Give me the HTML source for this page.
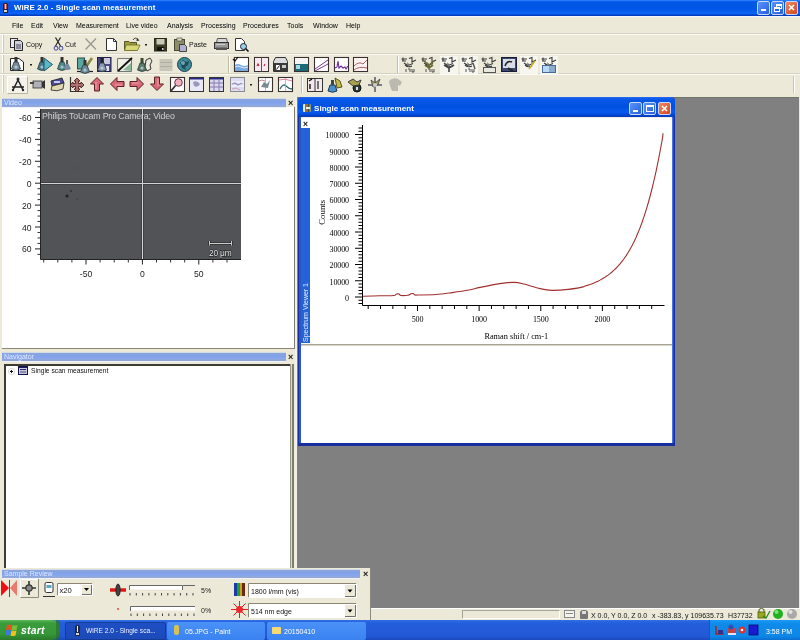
<!DOCTYPE html>
<html><head><meta charset="utf-8">
<style>
*{margin:0;padding:0;box-sizing:border-box}
html,body{width:800px;height:640px;overflow:hidden;background:#ECE9D8;font-family:"Liberation Sans",sans-serif;position:relative}
.t,svg,.xsm{will-change:transform}
.a{position:absolute}
.t{position:absolute;white-space:nowrap;line-height:1}
/* title bar */
#title{left:0;top:0;width:800px;height:16px;background:linear-gradient(#3a8cff 0px,#1468f0 1px,#0058e6 2px,#0055e5 9px,#0a64f5 13px,#0a60ee 14px,#003dbf 15px,#003dbf 16px)}
#title .txt{left:14px;top:3.5px;font-weight:bold;font-size:7.9px;color:#fff;letter-spacing:0.1px}
.tb{position:absolute;top:1px;width:13px;height:14px;border:1px solid #c8d8f8;border-radius:2px;background:linear-gradient(135deg,#5a94f8,#2a5ee0)}
.tbc{background:linear-gradient(135deg,#f08a60,#d4461c)}
/* menu */
#menu .t{top:22px;font-size:7px;color:#000}
.sep-h{position:absolute;height:1px;background:#d6d2c2}
.sep-hw{position:absolute;height:1px;background:#fbfaf5}
.dock-hdr{position:absolute;height:8px;background:linear-gradient(#8ca6d8,#80a2ea 40%,#86a6ee 60%,#96a8d0);box-shadow:0 -1px 0 #d4dcea,0 1px 0 #eef2fc}
.dock-hdr .t{left:2px;top:0px;font-size:7px;color:#dfe8ff}
.xsm{position:absolute;font-size:8px;font-weight:bold;color:#111;line-height:1}
</style></head><body>

<!-- title bar -->
<div id="title" class="a">
  <div class="a" style="left:3px;top:3px;width:5px;height:10px;background:#3a1a20;border-radius:2px 2px 1px 1px"></div><div class="a" style="left:4px;top:4px;width:3px;height:5px;background:#c84a3a"></div><div class="a" style="left:5px;top:4px;width:1px;height:5px;background:#f8e0d0"></div><div class="a" style="left:4px;top:10px;width:3px;height:2px;background:#e8d8c8"></div>
  <div class="t txt">WiRE 2.0 - Single scan measurement</div>
  <div class="tb" style="left:757px"><div class="a" style="left:3px;top:7px;width:5px;height:2px;background:#fff"></div></div>
  <div class="tb" style="left:771px"><div class="a" style="left:4px;top:2px;width:6px;height:5px;border:1px solid #fff;border-top-width:2px"></div><div class="a" style="left:2px;top:5px;width:6px;height:5px;border:1px solid #fff;border-top-width:2px;background:#2a62e6"></div></div>
  <div class="tb tbc" style="left:785px"><svg class="a" style="left:0;top:0" width="11" height="11"><path d="M3 3L8 8M8 3L3 8" stroke="#fff" stroke-width="1.6"/></svg></div>
</div>
<div class="a" style="left:0;top:16px;width:800px;height:1px;background:#f4f6fb"></div>

<!-- menu -->
<div id="menu">
  <div class="t" style="left:12px">File</div>
  <div class="t" style="left:31px">Edit</div>
  <div class="t" style="left:53px">View</div>
  <div class="t" style="left:76px">Measurement</div>
  <div class="t" style="left:126px">Live video</div>
  <div class="t" style="left:167px">Analysis</div>
  <div class="t" style="left:201px">Processing</div>
  <div class="t" style="left:243px">Procedures</div>
  <div class="t" style="left:287px">Tools</div>
  <div class="t" style="left:313px">Window</div>
  <div class="t" style="left:346px">Help</div>
</div>

<!-- toolbar band separators -->
<div class="sep-h" style="left:0;top:33px;width:800px"></div>
<div class="sep-hw" style="left:0;top:34px;width:800px"></div>
<div class="sep-h" style="left:0;top:53px;width:800px"></div>
<div class="sep-hw" style="left:0;top:54px;width:800px"></div>
<div class="sep-h" style="left:0;top:73px;width:800px"></div>
<div class="sep-hw" style="left:0;top:74px;width:800px"></div>

<!-- TOOLBARS -->
<div id="tools"><svg class="a" style="left:0;top:0" width="800" height="97" viewBox="0 0 800 97"><g transform="translate(10 37)"><rect x="0.5" y="1.5" width="7" height="9" fill="#e8e8f0" stroke="#333" /><path d="M4.5 3.5H10.5L12.5 5.5V13.5H4.5Z" fill="#d0d0dc" stroke="#222"/><rect x="6" y="7" width="5" height="5" fill="#8a8a9a"/></g><g transform="translate(54 37)"><path d="M1.5 0.5L6.5 9M6.5 0.5L1.5 9" stroke="#222" stroke-width="1.2" fill="none"/><circle cx="2" cy="11.3" r="1.9" fill="none" stroke="#5a5aa0" stroke-width="1.1"/><circle cx="7" cy="11.3" r="1.9" fill="none" stroke="#5a5aa0" stroke-width="1.1"/></g><g transform="translate(85 37)"><path d="M0.5 1.5L11 12.5M11 1.5L0.5 12.5" stroke="#9a9890" stroke-width="1.3" fill="none"/></g><g transform="translate(106 38)"><path d="M0.5 0.5H7.5L10.5 3.5V12.5H0.5Z" fill="#fff" stroke="#333"/><path d="M7.5 0.5V3.5H10.5" fill="none" stroke="#333"/></g><g transform="translate(124 37)"><path d="M0.5 4.5H5L6 5.5H12.5V13H0.5Z" fill="#9a9a40" stroke="#555520"/><path d="M2 8H16L13.5 13.5H0.5Z" fill="#d8d878" stroke="#6a6a20" stroke-width="0.8"/><path d="M9 3Q11 -0.5 14 2.5" stroke="#444" fill="none" stroke-width="1"/><path d="M13 1L15.5 3.5L12.5 4Z" fill="#222"/></g><rect x="145" y="44" width="2" height="1.5" fill="#222"/><g transform="translate(154 38)"><rect x="0.5" y="0.5" width="12" height="12.5" fill="#3c3c24" stroke="#2a2a18"/><rect x="2.5" y="1" width="8" height="5.5" fill="#c8c8b8"/><rect x="3" y="9" width="7" height="4" fill="#111"/><rect x="8" y="10" width="1.5" height="2" fill="#ddd"/></g><g transform="translate(174 38)"><rect x="0.5" y="1.5" width="10" height="11" fill="#8c8c68" stroke="#4a4a30"/><rect x="3" y="0" width="5" height="3" fill="#d8d8c0" stroke="#444" stroke-width="0.6"/><path d="M5.5 6.5H10.5L12.5 8.5V13.5H5.5Z" fill="#b0b0d0" stroke="#333" stroke-width="0.9"/></g><g transform="translate(214 38)"><path d="M3.5 0.5H12.5L13.5 4.5H2.5Z" fill="#d8d8d8" stroke="#555"/><rect x="0.5" y="4.5" width="14" height="6" fill="#9a9a9a" stroke="#333"/><rect x="2" y="9.5" width="11" height="2.5" fill="#555"/><rect x="2" y="6" width="9" height="1" fill="#ccc"/></g><g transform="translate(235 38)"><path d="M0.5 0.5H6.5L9.5 3.5V12.5H0.5Z" fill="#fff" stroke="#333"/><circle cx="8.5" cy="8.5" r="3" fill="#9ad0e0" stroke="#224" stroke-width="1"/><path d="M10.5 10.5L13.5 13.5" stroke="#111" stroke-width="1.6"/></g><g transform="translate(10 57)"><path d="M0.5 1.5H9L13.5 5V13.5H0.5Z" fill="#fff" stroke="#222"/><rect x="4.5" y="0" width="3" height="5" fill="#333"/><path d="M4 5H8L10.5 12Q6 15 1.5 12Z" fill="#7a8a98" stroke="#2a3a40" stroke-width="0.8"/><circle cx="6" cy="10" r="1.6" fill="#c8e0e8" opacity="0.7"/></g><rect x="30" y="64" width="2" height="1.5" fill="#222"/><g transform="translate(38 57)"><rect x="2.5" y="0" width="3" height="5" fill="#333"/><path d="M2 5H6L8.5 12Q4 15 -0.5 12Z" fill="#4a7a8a" stroke="#2a3a40" stroke-width="0.8"/><circle cx="4" cy="10" r="1.6" fill="#c8e0e8" opacity="0.7"/><path d="M6 1L14.5 7.5L6 14Z" fill="#58b8c8" stroke="#1a4a58" stroke-width="0.9"/></g><g transform="translate(58 57)"><rect x="2.5" y="0" width="3" height="5" fill="#333"/><path d="M2 5H6L8.5 12Q4 15 -0.5 12Z" fill="#4a8a8a" stroke="#2a3a40" stroke-width="0.8"/><circle cx="4" cy="10" r="1.6" fill="#c8e0e8" opacity="0.7"/><rect x="8" y="3" width="2" height="4" fill="#555"/><path d="M7.5 7H10.5L13 12Q9 14 6 12Z" fill="#7a8aa0"/></g><g transform="translate(77 57)"><rect x="0.5" y="1" width="7" height="11" fill="#58a8a0" stroke="#2a4a48"/><path d="M9 10L15 1" stroke="#8a8a40" stroke-width="2.5"/><path d="M0 14.5H16" stroke="#222" stroke-width="1.2"/><rect x="6.5" y="3" width="3" height="5" fill="#333"/><path d="M6 8H10L12.5 15Q8 18 3.5 15Z" fill="#6a8898" stroke="#2a3a40" stroke-width="0.8"/><circle cx="8" cy="13" r="1.6" fill="#c8e0e8" opacity="0.7"/></g><g transform="translate(97 57)"><rect x="0.5" y="0.5" width="13.5" height="14" fill="#4a4a88" stroke="#222248"/><rect x="7" y="1" width="6" height="6" fill="#c8c8e0"/><rect x="9" y="9" width="3" height="5" fill="#e0e0f0"/><rect x="3.5" y="1" width="3" height="5" fill="#222"/><path d="M3 6H7L9.5 13Q5 16 0.5 13Z" fill="#8a98b0" stroke="#2a3a40" stroke-width="0.8"/><circle cx="5" cy="11" r="1.6" fill="#c8e0e8" opacity="0.7"/></g><g transform="translate(117 57)"><path d="M0.5 1.5H14.5V14.5H0.5Z" fill="#eef0e8" stroke="#777"/><path d="M1 14L15 1" stroke="#111" stroke-width="1.8"/><path d="M6 13L14 6V14Z" fill="#8ab898"/></g><g transform="translate(138 57)"><rect x="2.5" y="1" width="3" height="5" fill="#3a4a30"/><path d="M2 6H6L8.5 13Q4 16 -0.5 13Z" fill="#5a7a68" stroke="#2a3a40" stroke-width="0.8"/><circle cx="4" cy="11" r="1.6" fill="#c8e0e8" opacity="0.7"/><path d="M8 3L12 1L14 4L12 8L13 12L9 14L7 10Z" fill="#e8e8dc" stroke="#333" stroke-width="1"/></g><g transform="translate(159 57)"><rect x="0.5" y="2" width="13" height="12" fill="#c8c6b8"/><rect x="1" y="5" width="12" height="1" fill="#b0aea0"/><rect x="1" y="9" width="12" height="1" fill="#b0aea0"/></g><g transform="translate(177 57)"><circle cx="7.5" cy="7.5" r="7" fill="#3a8a98" stroke="#1a4048" stroke-width="1"/><path d="M3 6L6 3L9 5L12 4L11 8L8 10L9 13L5 11L4 8Z" fill="#1a3a48" opacity="0.8"/><circle cx="6" cy="6" r="2" fill="#a8e0e8" opacity="0.6"/></g><path d="M228.5 56V73" stroke="#c0bca8"/><path d="M229.5 56V73" stroke="#fff"/><g transform="translate(234 57)"><rect x="0.5" y="0.5" width="14" height="14" fill="#fff" stroke="#3a3030" stroke-width="1.1"/><path d="M1 8Q4 6 7 8T14 8V14H1Z" fill="#78a8e0"/><path d="M1 10Q4 8 7 10T14 10" stroke="#fff" fill="none" stroke-width="0.8"/><path d="M-1 2L1 4L4 0" stroke="#111" stroke-width="1.2" fill="none"/></g><g transform="translate(254 57)"><rect x="0.5" y="0.5" width="14" height="14" fill="#fff" stroke="#3a3030" stroke-width="1.1"/><rect x="1" y="1" width="13" height="13" fill="#f8e8f0"/><path d="M7.5 0.5V14.5" stroke="#555"/><path d="M3 9L4 7L5 9M10 9L11 7" stroke="#c02030" fill="none" stroke-width="1.1"/></g><g transform="translate(273 57)"><path d="M2.5 0.5H12.5L14.5 4.5V14.5H0.5V4.5Z" fill="#dcdcdc" stroke="#333"/><rect x="1" y="6" width="14" height="8.5" fill="#3a3a3a"/><rect x="3" y="8" width="4" height="5" fill="#fff"/><path d="M3.5 12.5L6.5 8.5" stroke="#111"/><rect x="9" y="8" width="4" height="3" fill="#ccc"/></g><g transform="translate(294 57)"><rect x="0.5" y="0.5" width="14" height="14" fill="#fff" stroke="#3a3030" stroke-width="1.1"/><rect x="1" y="1" width="13" height="6" fill="#f4f4f4"/><rect x="1" y="7" width="13" height="7" fill="#1a6a78"/><rect x="2" y="8" width="4" height="4" fill="#a8d8e0"/></g><g transform="translate(314 57)"><rect x="0.5" y="0.5" width="14" height="14" fill="#fff" stroke="#3a3030" stroke-width="1.1"/><path d="M1 12L14 3M1 14L14 7" stroke="#7a3a90" stroke-width="1" fill="none"/></g><g transform="translate(334 57)"><rect x="0.5" y="0.5" width="14" height="14" fill="#fff" stroke="#3a3030" stroke-width="1.1"/><path d="M1 11L3 10L4 4L5 11L7 9L9 11L11 10L12 12L14 9" stroke="#6a2a98" stroke-width="1.1" fill="none"/></g><g transform="translate(353 57)"><rect x="0.5" y="0.5" width="14" height="14" fill="#fff" stroke="#3a3030" stroke-width="1.1"/><rect x="1" y="1" width="13" height="13" fill="#fcf0f0"/><path d="M1 9Q6 4 10 7L14 3M1 13Q6 9 14 11" stroke="#a05050" stroke-width="0.9" fill="none"/></g><path d="M397.5 56V73" stroke="#c0bca8"/><path d="M398.5 56V73" stroke="#fff"/><g transform="translate(401 57)"><path d="M0.5 2H6M1 4H5M2 0.5V4.5M8 1.5L11 0.5V5L15 3M3 6L7 8.5L12 6.5M4 8Q7 11 11 9" stroke="#3a3a3a" stroke-width="1.1" fill="none"/><path d="M6 5L9 8L7 10Z" fill="#777"/><path d="M5 12V15M7 12H9V15M11 12V15H13M13 12V15" stroke="#444" stroke-width="0.9" fill="none"/></g><g transform="translate(421 57)"><path d="M0.5 2H6M1 4H5M2 0.5V4.5M8 1.5L11 0.5V5L15 3M3 6L7 8.5L12 6.5M4 8Q7 11 11 9" stroke="#3a3a3a" stroke-width="1.1" fill="none"/><path d="M6 5L9 8L7 10Z" fill="#777"/><path d="M5 12V15M7 12H9V15M11 12V15H13M13 12V15" stroke="#444" stroke-width="0.9" fill="none"/><path d="M3 4L8 8L13 4M4 8L8 11L12 8" stroke="#6a6a30" stroke-width="1.6" fill="none"/></g><g transform="translate(441 57)"><rect x="-1" y="-1" width="18" height="18" fill="#f6f5ee"/><path d="M0.5 2H6M1 4H5M2 0.5V4.5M8 1.5L11 0.5V5L15 3M3 6L7 8.5L12 6.5M4 8Q7 11 11 9" stroke="#3a3a3a" stroke-width="1.1" fill="none"/><path d="M6 5L9 8L7 10Z" fill="#777"/><path d="M3 8L8 11L13 8M8 11V15" stroke="#444" stroke-width="1.6" fill="none"/></g><g transform="translate(461 57)"><rect x="-1" y="-1" width="18" height="18" fill="#f6f5ee"/><path d="M0.5 2H6M1 4H5M2 0.5V4.5M8 1.5L11 0.5V5L15 3M3 6L7 8.5L12 6.5M4 8Q7 11 11 9" stroke="#3a3a3a" stroke-width="1.1" fill="none"/><path d="M6 5L9 8L7 10Z" fill="#777"/><path d="M5 12V15M7 12H9V15M11 12V15H13M13 12V15" stroke="#444" stroke-width="0.9" fill="none"/><path d="M12 6L14 12" stroke="#555" stroke-width="1.4"/></g><g transform="translate(481 57)"><path d="M0.5 2H6M1 4H5M2 0.5V4.5M8 1.5L11 0.5V5L15 3M3 6L7 8.5L12 6.5M4 8Q7 11 11 9" stroke="#3a3a3a" stroke-width="1.1" fill="none"/><path d="M6 5L9 8L7 10Z" fill="#777"/><rect x="2.5" y="10.5" width="12" height="5" fill="#e8e8e0" stroke="#555" stroke-width="1"/></g><g transform="translate(501 57)"><rect x="0.5" y="0.5" width="15" height="14" fill="#3a4a6a" stroke="#1a1a3a"/><rect x="2" y="2" width="12" height="9" fill="#d8dce8"/><path d="M4 9Q6 3 11 5M7 11L12 14" stroke="#222" stroke-width="1.6" fill="none"/></g><g transform="translate(521 57)"><rect x="-1" y="-1" width="18" height="18" fill="#f6f5ee"/><path d="M0.5 2H6M1 4H5M2 0.5V4.5M8 1.5L11 0.5V5L15 3M3 6L7 8.5L12 6.5M4 8Q7 11 11 9" stroke="#3a3a3a" stroke-width="1.1" fill="none"/><path d="M6 5L9 8L7 10Z" fill="#777"/><path d="M8 12L14 4" stroke="#c8b030" stroke-width="1.5"/></g><g transform="translate(541 57)"><rect x="-1" y="-1" width="18" height="18" fill="#f6f5ee"/><path d="M0.5 2H6M1 4H5M2 0.5V4.5M8 1.5L11 0.5V5L15 3M3 6L7 8.5L12 6.5M4 8Q7 11 11 9" stroke="#3a3a3a" stroke-width="1.1" fill="none"/><path d="M6 5L9 8L7 10Z" fill="#777"/><rect x="1.5" y="8.5" width="13" height="7" fill="#b8d8f4" stroke="#4a6a9a"/><path d="M9 9V15M11 9V15M13 9V15" stroke="#4a6a9a" stroke-width="0.8"/></g><path d="M7.5 93V76.5H27" stroke="#fff" fill="none"/><path d="M7.5 93.5H27.5V76.5" stroke="#b8b4a0" fill="none"/><rect x="8" y="77" width="19" height="16" fill="#f4f2ea"/><g transform="translate(11 77)"><circle cx="7" cy="2" r="1.5" fill="#333"/><path d="M7 3L2 13M7 3L12 13M1 10H13" stroke="#222" stroke-width="1.5" fill="none"/><circle cx="2" cy="13" r="1.2" fill="#222"/><circle cx="12" cy="13" r="1.2" fill="#222"/></g><g transform="translate(30 79)"><rect x="3" y="2" width="9" height="7" fill="#b0b0b8" stroke="#333" stroke-width="0.8"/><rect x="0" y="3" width="4" height="2" fill="#444"/><path d="M12 3L15 1V10L12 8Z" fill="#333"/></g><g transform="translate(49 77)"><path d="M2 4L13 1L15 6L3 9Z" fill="#4a4a98" stroke="#222" stroke-width="0.9"/><path d="M3 9L15 6L14 12Q8 15 2 13Z" fill="#e0d8b0" stroke="#333" stroke-width="0.9"/><rect x="5" y="4" width="6" height="2" fill="#c8c8f0"/></g><g transform="translate(69 77)"><path d="M1.5 0V14.5H15" stroke="#333" stroke-width="1.2" fill="none"/><path d="M8 1L11 4H9.5V6.5H12V5L15 8L12 11V9.5H9.5V12H11L8 15L5 12H6.5V9.5H4V11L1 8L4 5V6.5H6.5V4H5Z" fill="#b07070" stroke="#4a2020" stroke-width="0.9"/></g><g transform="translate(90 77) rotate(0 7 7)"><path d="M7 0.5L13.5 7H9.5V14H4.5V7H0.5Z" fill="#d86a78" stroke="#5a2028" stroke-width="1"/><path d="M6 5V12" stroke="#f0a0b0" stroke-width="1"/></g><g transform="translate(110 77) rotate(-90 7 7)"><path d="M7 0.5L13.5 7H9.5V14H4.5V7H0.5Z" fill="#d86a78" stroke="#5a2028" stroke-width="1"/><path d="M6 5V12" stroke="#f0a0b0" stroke-width="1"/></g><g transform="translate(130 77) rotate(90 7 7)"><path d="M7 0.5L13.5 7H9.5V14H4.5V7H0.5Z" fill="#d86a78" stroke="#5a2028" stroke-width="1"/><path d="M6 5V12" stroke="#f0a0b0" stroke-width="1"/></g><g transform="translate(150 77) rotate(180 7 7)"><path d="M7 0.5L13.5 7H9.5V14H4.5V7H0.5Z" fill="#d86a78" stroke="#5a2028" stroke-width="1"/><path d="M6 5V12" stroke="#f0a0b0" stroke-width="1"/></g><g transform="translate(170 77)"><rect x="0.5" y="0.5" width="14" height="14" fill="#fff" stroke="#3a3030" stroke-width="1.1"/><circle cx="8.5" cy="5.5" r="3.8" fill="#f0b0c0" stroke="#6a3040"/><path d="M5.5 8.5L1 14" stroke="#333" stroke-width="1.8"/></g><g transform="translate(189 77)"><rect x="0.5" y="0.5" width="14" height="14" fill="#e8e8f8" stroke="#333"/><rect x="1" y="1" width="13" height="1.5" fill="#2a2a88"/><path d="M4 5Q8 3 11 7Q9 11 5 9Z" fill="#9a98b8"/></g><g transform="translate(209 77)"><rect x="0.5" y="0.5" width="14" height="14" fill="#d8d8f0" stroke="#333"/><rect x="1" y="1" width="13" height="1.5" fill="#2a2a88"/><path d="M1 6H14M1 10H14M5 3V14M10 3V14" stroke="#8a7aa8" stroke-width="1"/></g><g transform="translate(230 77)"><rect x="0.5" y="0.5" width="14" height="14" fill="#dcdcf4" stroke="#8a8a90"/><path d="M1 5H14M1 9H14" stroke="#fff" stroke-width="1"/><path d="M2 7L5 6L8 8L12 6" stroke="#9a90c0" stroke-width="1.2" fill="none"/><path d="M2 12L6 11L10 13" stroke="#d0a0b0" stroke-width="1" fill="none"/></g><rect x="250" y="84" width="2" height="1.5" fill="#222"/><g transform="translate(258 77)"><rect x="0.5" y="0.5" width="14" height="14" fill="#fff" stroke="#3a3030" stroke-width="1.1"/><path d="M7.5 1V14" stroke="#aaa" stroke-width="0.8"/><path d="M3 10L6 5L9 7L12 3L10 11Z" fill="#7a8a90"/><path d="M1 4Q4 2 7 4" stroke="#d08090" fill="none"/></g><g transform="translate(278 77)"><rect x="0.5" y="0.5" width="14" height="14" fill="#fff" stroke="#3a3030" stroke-width="1.1"/><path d="M1 3Q7 1 14 4" stroke="#e07090" stroke-width="0.9" fill="none"/><path d="M2 12Q5 6 8 9T14 12" stroke="#2a6a6a" stroke-width="1.3" fill="none"/><path d="M7.5 1V14" stroke="#aaa" stroke-width="0.8"/></g><path d="M301.5 76V93" stroke="#c0bca8"/><path d="M302.5 76V93" stroke="#fff"/><g transform="translate(307 77)"><rect x="0.5" y="1.5" width="15" height="13" fill="#f4e8ec" stroke="#333"/><path d="M8 2V14" stroke="#333"/><path d="M2 4L5 2M3 7V12" stroke="#111" stroke-width="1.4"/><path d="M11 4V12" stroke="#222" stroke-width="1.2"/></g><g transform="translate(328 77)"><path d="M2 8H7L9 14Q4.5 16.5 0 14Z" fill="#4a90c8" stroke="#1a3a58"/><rect x="3" y="3" width="3" height="5" fill="#444"/><path d="M7 1L12 4L14 10L9 11Z" fill="#c8b848" stroke="#4a4a18" stroke-width="0.9"/></g><g transform="translate(347 77)"><circle cx="10" cy="11" r="4" fill="#2a3a38" stroke="#111"/><path d="M1 5L6 2L10 5L14 3L12 8L6 9Z" fill="#a8a050" stroke="#333" stroke-width="0.9"/><rect x="9" y="10" width="2" height="3" fill="#ddd"/></g><g transform="translate(367 77)"><path d="M8 0V15M1 8H15" stroke="#7a7880" stroke-width="2"/><path d="M4 3L8 6L13 2L11 8L6 10Z" fill="#a09a5a" stroke="#444" stroke-width="0.8"/><circle cx="8" cy="8" r="2" fill="#ccc"/></g><g transform="translate(387 77)"><path d="M2 4Q6 0 11 2L15 5L13 9L11 8V14H5L3 9Z" fill="#bcbab0"/></g><path d="M793.5 76V93" stroke="#c8c4b4"/><path d="M794.5 76V93" stroke="#fff"/><path d="M2.5 35V53M2.5 55V73M2.5 75V93" stroke="#fff"/><path d="M3.5 35V53M3.5 55V73M3.5 75V93" stroke="#cfcbb8"/></svg><div class="t" style="left:26px;top:41px;font-size:7px;color:#111">Copy</div><div class="t" style="left:65px;top:41px;font-size:7px;color:#111">Cut</div><div class="t" style="left:189px;top:41px;font-size:7px;color:#111">Paste</div></div>

<!-- MDI background -->
<div class="a" style="left:297px;top:97px;width:502px;height:511px;background:#808080"></div>
<div class="a" style="left:297px;top:97px;width:502px;height:1px;background:#6f746a"></div>

<!-- LEFT DOCK: Video panel -->
<div class="a" style="left:2px;top:107px;width:292px;height:242px;background:#fff"></div>
<div class="a" style="left:2px;top:348px;width:292px;height:1px;background:#8a8670"></div>
<div class="dock-hdr" style="left:2px;top:99px;width:284px"><div class="t">Video</div></div>
<div class="xsm" style="left:287.5px;top:98.5px;font-size:9px">&#215;</div>

<!-- video content -->
<div class="a" style="left:41px;top:109px;width:200px;height:150px;background:#515357"></div>
<svg class="a" style="left:0;top:0" width="800" height="640" viewBox="0 0 800 640">
<path d="M40.5 109V259.5H241" stroke="#222" stroke-width="1" fill="none"/>
<path d="M35 117.50H40.5M35 139.40H40.5M35 161.30H40.5M35 183.20H40.5M35 205.10H40.5M35 227.00H40.5M35 248.90H40.5M86.00 259.5V264.5M142.40 259.5V264.5M198.80 259.5V264.5" stroke="#222" stroke-width="1" fill="none"/>
<path d="M37.5 112.02H40.5M37.5 122.97H40.5M37.5 128.45H40.5M37.5 133.92H40.5M37.5 144.88H40.5M37.5 150.35H40.5M37.5 155.82H40.5M37.5 166.77H40.5M37.5 172.25H40.5M37.5 177.72H40.5M37.5 188.67H40.5M37.5 194.15H40.5M37.5 199.62H40.5M37.5 210.57H40.5M37.5 216.05H40.5M37.5 221.52H40.5M37.5 232.47H40.5M37.5 237.95H40.5M37.5 243.42H40.5M37.5 254.38H40.5M43.70 259.5V262.5M57.80 259.5V262.5M71.90 259.5V262.5M100.10 259.5V262.5M114.20 259.5V262.5M128.30 259.5V262.5M156.50 259.5V262.5M170.60 259.5V262.5M184.70 259.5V262.5M212.90 259.5V262.5M227.00 259.5V262.5" stroke="#333" stroke-width="1" fill="none"/>
<g font-family="Liberation Sans" font-size="8.6" fill="#222"><text x="31.5" y="121.00" text-anchor="end">-60</text><text x="31.5" y="142.90" text-anchor="end">-40</text><text x="31.5" y="164.80" text-anchor="end">-20</text><text x="31.5" y="186.70" text-anchor="end">0</text><text x="31.5" y="208.60" text-anchor="end">20</text><text x="31.5" y="230.50" text-anchor="end">40</text><text x="31.5" y="252.40" text-anchor="end">60</text><text x="86.00" y="277.3" text-anchor="middle">-50</text><text x="142.40" y="277.3" text-anchor="middle">0</text><text x="198.80" y="277.3" text-anchor="middle">50</text></g>
<path d="M142.5 109V259M41 183.5H241" stroke="#3a3b3e" stroke-width="2.6" fill="none"/>
<path d="M142.5 109V259M41 183.5H241" stroke="#d4d4d4" stroke-width="1" fill="none"/>
<circle cx="67" cy="196" r="1.6" fill="#222"/><circle cx="71" cy="191" r="1.1" fill="#333"/><circle cx="77" cy="199" r="0.9" fill="#444"/><circle cx="75" cy="168" r="0.8" fill="#444"/>
<path d="M209.5 241V245.5M231.5 241V245.5M210 243.5H231" stroke="#222" stroke-width="2.2" fill="none"/><path d="M209.5 241V245.5M231.5 241V245.5M210 243.5H231" stroke="#ddd" stroke-width="0.9" fill="none"/>
<text x="209" y="256" font-family="Liberation Sans" font-size="8.4" fill="#eee" stroke="#111" stroke-width="1" paint-order="stroke" letter-spacing="-0.2">20 &#956;m</text>
<text x="42" y="119" font-family="Liberation Sans" font-size="8.8" fill="#cfcfcf" letter-spacing="-0.15">Philips ToUcam Pro Camera; Video</text>
</svg>
<!-- Navigator -->
<div class="dock-hdr" style="left:2px;top:353px;width:284px"><div class="t">Navigator</div></div>
<div class="xsm" style="left:288px;top:353px;font-size:9px">&#215;</div>
<div class="a" style="left:4px;top:364px;width:286px;height:204px;background:#fff;border-top:2px solid #3c3c34;border-left:2px solid #3c3c34"></div><div class="a" style="left:290px;top:364px;width:1px;height:204px;background:#9a9a8c"></div><div class="a" style="left:291px;top:364px;width:1px;height:204px;background:#d8d8cc"></div><div class="a" style="left:292px;top:364px;width:2px;height:204px;background:#80806e"></div><div class="a" style="left:295px;top:364px;width:1px;height:204px;background:#f4f4e8"></div>

<div class="a" style="left:294px;top:107px;width:1px;height:242px;background:#7e7c70"></div><div class="a" style="left:295px;top:97px;width:2px;height:511px;background:#f2f1e8"></div>
<!-- MDI child -->
<div id="mdi" class="a" style="left:298px;top:97px;width:377px;height:349px;background:#1a2f9e;border-radius:4px 4px 0 0;overflow:hidden">
<div class="a" style="left:0;top:0;width:377px;height:20px;background:linear-gradient(#2a6af0 0px,#0a58e8 2px,#0050e0 10px,#0a5af0 15px,#0040c8 19px,#0a36b0 20px)"></div>
<div class="a" style="left:1px;top:20px;width:2px;height:326px;background:#2a56c8"></div>
<div class="a" style="left:374px;top:20px;width:2px;height:326px;background:#2a4ab8"></div>
<div class="a" style="left:374px;top:20px;width:1px;height:326px;background:#4a72e0"></div>
</div>
<div class="a" style="left:303px;top:104px;width:8px;height:8px;background:linear-gradient(90deg,#e8e8f0 0,#e8e8f0 25%,#a06a38 25%,#8a7a30 60%,#2a3a30 60%,#9ab090 100%);border-radius:1px"></div><div class="a" style="left:306px;top:107px;width:4px;height:2px;background:#f0f0e0"></div>
<div class="t" style="left:314px;top:104.5px;font-size:8.1px;font-weight:bold;color:#fff">Single scan measurement</div>
<div class="tb" style="left:629px;top:102px;width:13px;height:13px"><div class="a" style="left:3px;top:7px;width:5px;height:2px;background:#fff"></div></div>
<div class="tb" style="left:643px;top:102px;width:13px;height:13px"><div class="a" style="left:2px;top:2px;width:8px;height:7px;border:1px solid #fff;border-top-width:2px"></div></div>
<div class="tb tbc" style="left:658px;top:102px;width:13px;height:13px"><svg class="a" style="left:0;top:0" width="11" height="11"><path d="M3 3L8 8M8 3L3 8" stroke="#fff" stroke-width="1.6"/></svg></div>
<div class="a" style="left:301px;top:117px;width:371px;height:326px;background:#fff"></div>
<div class="a" style="left:301px;top:117px;width:371px;height:1px;background:#f1efe2"></div>
<div class="a" style="left:301px;top:344px;width:371px;height:1px;background:#a8a598"></div>
<div class="a" style="left:301px;top:345px;width:371px;height:1px;background:#d8d4c4"></div>
<div class="a" style="left:301px;top:128px;width:9px;height:215px;background:#2462d8"></div>
<div class="t" style="left:302px;top:342px;transform-origin:0 0;transform:rotate(-90deg);font-size:7px;color:#e8f0ff">Spectrum Viewer 1</div>
<div class="xsm" style="left:302.5px;top:119.5px;font-size:8.5px">&#215;</div>
<svg class="a" style="left:0;top:0" width="800" height="640" viewBox="0 0 800 640">
<path d="M362.5 125V305.5H664.5" stroke="#000" stroke-width="1" fill="none"/>
<path d="M355 297.00H362.5M355 280.75H362.5M355 264.50H362.5M355 248.25H362.5M355 232.00H362.5M355 215.75H362.5M355 199.50H362.5M355 183.25H362.5M355 167.00H362.5M355 150.75H362.5M355 134.50H362.5M417.50 305V311M479.13 305V311M540.77 305V311M602.40 305V311" stroke="#000" stroke-width="1" fill="none"/>
<path d="M358.5 303.50H362.5M358.5 300.25H362.5M358.5 293.75H362.5M358.5 290.50H362.5M358.5 287.25H362.5M358.5 284.00H362.5M358.5 277.50H362.5M358.5 274.25H362.5M358.5 271.00H362.5M358.5 267.75H362.5M358.5 261.25H362.5M358.5 258.00H362.5M358.5 254.75H362.5M358.5 251.50H362.5M358.5 245.00H362.5M358.5 241.75H362.5M358.5 238.50H362.5M358.5 235.25H362.5M358.5 228.75H362.5M358.5 225.50H362.5M358.5 222.25H362.5M358.5 219.00H362.5M358.5 212.50H362.5M358.5 209.25H362.5M358.5 206.00H362.5M358.5 202.75H362.5M358.5 196.25H362.5M358.5 193.00H362.5M358.5 189.75H362.5M358.5 186.50H362.5M358.5 180.00H362.5M358.5 176.75H362.5M358.5 173.50H362.5M358.5 170.25H362.5M358.5 163.75H362.5M358.5 160.50H362.5M358.5 157.25H362.5M358.5 154.00H362.5M358.5 147.50H362.5M358.5 144.25H362.5M358.5 141.00H362.5M358.5 137.75H362.5M358.5 131.25H362.5M358.5 128.00H362.5M368.19 305V309M380.52 305V309M392.85 305V309M405.17 305V309M429.83 305V309M442.15 305V309M454.48 305V309M466.81 305V309M491.46 305V309M503.79 305V309M516.12 305V309M528.44 305V309M553.10 305V309M565.42 305V309M577.75 305V309M590.08 305V309M614.73 305V309M627.06 305V309M639.39 305V309M651.71 305V309" stroke="#000" stroke-width="1" fill="none"/>
<g font-family="Liberation Serif" font-size="8" fill="#000" letter-spacing="-0.1"><text x="349" y="300.80" text-anchor="end">0</text><text x="349" y="284.55" text-anchor="end">10000</text><text x="349" y="268.30" text-anchor="end">20000</text><text x="349" y="252.05" text-anchor="end">30000</text><text x="349" y="235.80" text-anchor="end">40000</text><text x="349" y="219.55" text-anchor="end">50000</text><text x="349" y="203.30" text-anchor="end">60000</text><text x="349" y="187.05" text-anchor="end">70000</text><text x="349" y="170.80" text-anchor="end">80000</text><text x="349" y="154.55" text-anchor="end">90000</text><text x="349" y="138.30" text-anchor="end">100000</text><text x="417.50" y="321.5" text-anchor="middle">500</text><text x="479.13" y="321.5" text-anchor="middle">1000</text><text x="540.77" y="321.5" text-anchor="middle">1500</text><text x="602.40" y="321.5" text-anchor="middle">2000</text>
<text x="516.3" y="339.2" text-anchor="middle" font-size="8.3" letter-spacing="0">Raman shift / cm-1</text>
<text transform="translate(325 212.3) rotate(-90)" text-anchor="middle" font-size="8.8" letter-spacing="0">Counts</text>
</g>
<path d="M363 296.3C365.83 296.22 374.83 295.93 380 295.8C385.17 295.67 391.33 295.77 394 295.5C396.67 295.23 395.17 294.45 396 294.2C396.83 293.95 398.17 293.78 399 294C399.83 294.22 399.50 295.30 401 295.5C402.50 295.70 406.33 295.48 408 295.2C409.67 294.92 410.17 294.08 411 293.8C411.83 293.52 412.33 293.30 413 293.5C413.67 293.70 414.17 294.75 415 295C415.83 295.25 414.50 295.08 418 295C421.50 294.92 430.33 294.90 436 294.5C441.67 294.10 446.50 293.35 452 292.6C457.50 291.85 464.33 290.87 469 290C473.67 289.13 474.83 288.47 480 287.4C485.17 286.33 494.33 284.43 500 283.6C505.67 282.77 510.00 282.33 514 282.4C518.00 282.47 519.67 282.97 524 284C528.33 285.03 535.33 287.53 540 288.6C544.67 289.67 547.33 290.27 552 290.4C556.67 290.53 562.67 290.03 568 289.4C573.33 288.77 578.67 288.15 584 286.6L586.0 285.74L588.0 285.13L590.0 284.45L592.0 283.72L594.0 282.93L596.0 282.07L598.0 281.14L600.0 280.13L602.0 279.03L604.0 277.84L606.0 276.55L608.0 275.15L610.0 273.63L612.0 271.98L614.0 270.20L616.0 268.26L618.0 266.16L620.0 263.89L622.0 261.42L624.0 258.76L626.0 255.87L628.0 252.74L630.0 249.35L632.0 245.69L634.0 241.73L636.0 237.46L638.0 232.84L640.0 227.85L642.0 222.48L644.0 216.68L646.0 210.44L648.0 203.73L650.0 196.51L652.0 188.75L654.0 180.43L656.0 171.51L658.0 161.96L660.0 151.76L662.0 140.85L662.7 136.87L663 133.2" stroke="#a03030" stroke-width="1.1" fill="none" stroke-linejoin="round"/>
</svg>

<!-- nav item -->
<div class="a" style="left:8px;top:368px;width:7px;height:7px;border:1px solid #d8d8d4;border-radius:3px"></div>
<div class="a" style="left:10px;top:371px;width:3px;height:1px;background:#111"></div>
<div class="a" style="left:11px;top:370px;width:1px;height:3px;background:#111"></div>
<div class="a" style="left:18px;top:366px;width:10px;height:9px;background:#1c1c60;border:1px solid #141448"></div>
<div class="a" style="left:19px;top:368px;width:8px;height:6px;background:#c8c8e0"></div>
<div class="a" style="left:20px;top:369px;width:6px;height:1px;background:#2a2a70"></div>
<div class="a" style="left:20px;top:371px;width:6px;height:2px;background:#8a8ab0"></div>
<div class="t" style="left:30.5px;top:367.5px;font-size:6.7px;color:#111">Single scan measurement</div>
<!-- Sample review -->
<div class="a" style="left:0;top:568px;width:371px;height:52px;background:#ECE9D8;border-right:1px solid #8a8a80"></div>
<div class="dock-hdr" style="left:2px;top:570px;width:358px"><div class="t">Sample Review</div></div>
<div class="xsm" style="left:362.5px;top:570px;font-size:9px">&#215;</div>

<!-- status bar -->
<div class="a" style="left:371px;top:608px;width:429px;height:12px;background:#ECE9D8;border-top:1px solid #fff"></div>

<!-- taskbar -->
<div id="taskbar" class="a" style="left:0;top:620px;width:800px;height:20px;background:linear-gradient(#2f6fe8,#245edb 3px,#2358d6 16px,#1b48bd)"></div>

<!-- sample review content -->
<svg class="a" style="left:0;top:0" width="800" height="640" viewBox="0 0 800 640">
<path d="M1 580L9 588L1 596Z" fill="#ee1010"/><path d="M17 580L10 588L17 596Z" fill="#e87a70"/>
<path d="M9.5 580V597" stroke="#553" stroke-width="1"/>
<path d="M20.5 597.5H38.5V579" stroke="#8c8a78" fill="none"/><path d="M20.5 597V579.5H38" stroke="#fff" fill="none"/>
<path d="M29 581V595M22 588H36" stroke="#333" stroke-width="1.6"/>
<circle cx="29" cy="588" r="3.2" fill="#888" stroke="#333" stroke-width="1.2"/>
<rect x="45" y="582.5" width="8" height="10" rx="1.5" fill="#fff" stroke="#333"/>
<rect x="46.5" y="585" width="5" height="3" fill="#58a8c8"/>
<path d="M43 596.5H55" stroke="#333"/>
<path d="M57.5 595.5V583.5H92.5" stroke="#8a8670" fill="none"/><path d="M57.5 595.5H92.5V583.5" stroke="#fff" fill="none"/>
<rect x="58" y="584" width="34" height="11" fill="#fff"/>
<rect x="82" y="585" width="9" height="9" fill="#ece9d8"/><path d="M82 594.5H91.5V585" stroke="#716f64" fill="none"/>
<path d="M84 588H89L86.5 591Z" fill="#000"/>
<text x="59.5" y="592.8" font-family="Liberation Sans" font-size="7.6" fill="#111">x20</text>
<!-- red cross -->
<path d="M110 590H126" stroke="#e01818" stroke-width="3"/>
<ellipse cx="118" cy="590" rx="2.2" ry="6" fill="#444" stroke="#111" stroke-width="0.8"/>
<path d="M110 590H115M121 590H126" stroke="#e01818" stroke-width="3"/>
<circle cx="118" cy="609" r="0.9" fill="#e03030"/>
<!-- sliders -->
<path d="M129.5 590V585.5H182M182.5 590V585.5H195" stroke="#666" fill="none"/>
<rect x="130" y="586" width="52" height="3.5" fill="#fff"/>
<path d="M130.0 593V595.5M136.3 593V595.5M142.6 593V595.5M148.9 593V595.5M155.2 593V595.5M161.5 593V595.5M167.8 593V595.5M174.1 593V595.5M180.4 593V595.5M186.7 593V595.5M193.0 593V595.5" stroke="#333" stroke-width="0.9"/>
<path d="M130.5 611V606.5H195" stroke="#666" fill="none"/>
<rect x="131" y="607" width="64" height="3.5" fill="#fff"/>
<path d="M131.0 613.5V616.0M137.3 613.5V616.0M143.6 613.5V616.0M149.9 613.5V616.0M156.2 613.5V616.0M162.5 613.5V616.0M168.8 613.5V616.0M175.1 613.5V616.0M181.4 613.5V616.0M187.7 613.5V616.0M194.0 613.5V616.0" stroke="#333" stroke-width="0.9"/>
<text x="201" y="592.5" font-family="Liberation Sans" font-size="7" fill="#222">5%</text>
<text x="201" y="612.5" font-family="Liberation Sans" font-size="7" fill="#222">0%</text>
<!-- grating icon -->
<rect x="234" y="583" width="3" height="13" fill="#1a3aa8"/><rect x="237" y="583" width="3" height="13" fill="#18a040"/><rect x="240" y="583" width="2" height="13" fill="#c8a020"/><rect x="242" y="583" width="3" height="13" fill="#6a2a10"/>
<!-- laser icon -->
<g stroke="#e82020" stroke-width="1"><path d="M239.5 601V618M231 609.5H248M233.5 603.5L245.5 615.5M245.5 603.5L233.5 615.5"/></g>
<circle cx="239.5" cy="609.5" r="3.5" fill="#f02a2a"/>
<!-- combos -->
<path d="M248.5 597.5V583.5H356.5" stroke="#8a8670" fill="none"/><path d="M248.5 597.5H356.5V583.5" stroke="#fff" fill="none"/>
<rect x="249" y="584" width="107" height="13" fill="#fff"/>
<rect x="345" y="585" width="10" height="11" fill="#ece9d8"/><path d="M345 596.5H355.5V585" stroke="#716f64" fill="none"/>
<path d="M347.5 589.5H352.5L350 592.5Z" fill="#000"/>
<text x="251" y="593.5" font-family="Liberation Sans" font-size="7" fill="#111">1800 l/mm (vis)</text>
<path d="M248.5 617.5V603.5H356.5" stroke="#8a8670" fill="none"/><path d="M248.5 617.5H356.5V603.5" stroke="#fff" fill="none"/>
<rect x="249" y="604" width="107" height="13" fill="#fff"/>
<rect x="345" y="605" width="10" height="11" fill="#ece9d8"/><path d="M345 616.5H355.5V605" stroke="#716f64" fill="none"/>
<path d="M347.5 609.5H352.5L350 612.5Z" fill="#000"/>
<text x="251" y="613.5" font-family="Liberation Sans" font-size="7" fill="#111">514 nm edge</text>
</svg>
<!-- status content -->
<div class="a" style="left:462px;top:610px;width:98px;height:9px;border-top:1px solid #a8a698;border-left:1px solid #a8a698;border-bottom:1px solid #fff;border-right:1px solid #fff"></div>
<div class="a" style="left:564px;top:610px;width:11px;height:8px;border:1px solid #888;background:#f4f4ee"></div>
<div class="a" style="left:566px;top:613px;width:7px;height:1px;background:#888"></div>
<div class="a" style="left:580px;top:610px;width:8px;height:9px;background:#777;border-radius:3px 3px 1px 1px"></div>
<div class="a" style="left:582px;top:611px;width:4px;height:3px;background:#ddd"></div>
<div class="t" style="left:591px;top:612px;font-size:7px;color:#111">X 0.0, Y 0.0, Z 0.0</div>
<div class="t" style="left:652px;top:612px;font-size:7px;color:#111">x -383.83, y 109635.73</div>
<div class="t" style="left:728px;top:612px;font-size:7px;color:#111">H37732</div>
<svg class="a" style="left:0;top:0" width="800" height="640" viewBox="0 0 800 640">
<rect x="758" y="612" width="7" height="6" fill="#9aa820" stroke="#4a5a10" stroke-width="0.8"/><path d="M759 612V609.5Q761.5 607 764 609.5V612" stroke="#4a5a10" fill="none"/><path d="M763 616L766 618L770 611" stroke="#2a8a20" stroke-width="1.3" fill="none"/>
<circle cx="778" cy="614" r="5" fill="#20b020"/><circle cx="776.5" cy="612" r="2" fill="#90f090" opacity="0.8"/>
<circle cx="792" cy="614" r="5" fill="#a8a8a8"/><circle cx="790.5" cy="612" r="2" fill="#eee" opacity="0.8"/>
</svg>
<!-- taskbar content -->
<div class="a" style="left:0;top:620px;width:60px;height:20px;border-radius:0 8px 8px 0;background:linear-gradient(#5cb85c 0px,#3a9c3a 3px,#36963a 14px,#2a7a2a 20px)"></div>
<div class="a" style="left:56px;top:620px;width:4px;height:20px;border-radius:0 6px 6px 0;background:#2a6a2a;opacity:0.6"></div>
<svg class="a" style="left:0;top:0" width="800" height="640" viewBox="0 0 800 640">
<path d="M7 625Q9.5 624 12 625L11 630Q8.5 629 6 630Z" fill="#e8502a"/>
<path d="M12.5 625Q15 626 17.5 625L16.5 630Q14 631 11.5 630Z" fill="#7ac03a"/>
<path d="M6 630.5Q8.5 629.5 11 630.5L10 635.5Q7.5 634.5 5 635.5Z" fill="#3a7ae8"/>
<path d="M11.5 630.5Q14 631.5 16.5 630.5L15.5 635.5Q13 636.5 10.5 635.5Z" fill="#f0c020"/>
</svg>
<div class="t" style="left:21px;top:624.5px;font-size:10.5px;font-weight:bold;font-style:italic;color:#fff;letter-spacing:0.2px">start</div>
<div class="a" style="left:65px;top:622px;width:101px;height:18px;border-radius:2px;background:linear-gradient(#1e4fc4,#1c4ab8);border:1px solid #173c98"></div>
<div class="a" style="left:75px;top:625px;width:5px;height:11px;background:#222a40;border-radius:2px 2px 1px 1px"></div><div class="a" style="left:77px;top:626px;width:1px;height:6px;background:#f0f0f0"></div><div class="a" style="left:76px;top:633px;width:3px;height:2px;background:#d8d8d0"></div>
<div class="t" style="left:86px;top:628px;font-size:6.6px;color:#eef">WiRE 2.0 - Single sca...</div>
<div class="a" style="left:167px;top:622px;width:98px;height:18px;border-radius:2px;background:linear-gradient(#4a92f8,#3a82f0);"></div>
<div class="a" style="left:174px;top:625px;width:5px;height:10px;background:#d8c058;border-radius:2px 2px 3px 3px"></div>
<div class="t" style="left:185px;top:628px;font-size:7px;color:#fff">05.JPG - Paint</div>
<div class="a" style="left:267px;top:622px;width:99px;height:18px;border-radius:2px;background:linear-gradient(#4a92f8,#3a82f0);"></div>
<div class="a" style="left:272px;top:627px;width:9px;height:7px;background:#f8d870;border-radius:1px"></div>
<div class="t" style="left:284px;top:628px;font-size:7px;color:#fff">20150410</div>
<div class="a" style="left:709px;top:620px;width:91px;height:20px;background:linear-gradient(#1a9af8,#0f8ae8 4px,#0d88e8 16px,#0a6fd0);border-left:1px solid #0a5ac0"></div>
<svg class="a" style="left:0;top:0" width="800" height="640" viewBox="0 0 800 640">
<path d="M716 626V634H724" stroke="#b02020" stroke-width="1.5" fill="none"/><rect x="718" y="630" width="5" height="4" fill="#303090"/>
<rect x="728" y="628" width="8" height="6" fill="#c84040"/><circle cx="731" cy="627" r="2.5" fill="#3050b0"/><rect x="728" y="633" width="8" height="2" fill="#e0e0ff"/>
<circle cx="742" cy="630" r="3.5" fill="#e03030"/><circle cx="742" cy="630" r="1.3" fill="#fff"/>
<rect x="749" y="625" width="9" height="10" fill="#1a1ad0" stroke="#0a0a70" stroke-width="0.8"/>
</svg>
<div class="t" style="left:766px;top:628px;font-size:7px;color:#fff">3:58 PM</div>
</body></html>
